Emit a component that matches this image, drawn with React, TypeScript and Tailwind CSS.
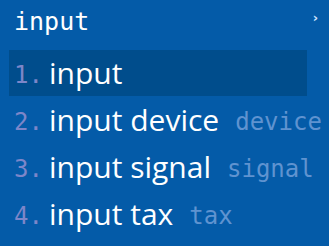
const candidates = [
  { text: "input", note: "" },
  { text: "input device", note: "device" },
  { text: "input signal", note: "signal" },
  { text: "input tax", note: "tax" },
];

export default function App() {
  return (
    <main className="w-[329px] h-[246px] bg-[#045ba8] overflow-hidden">
      <div className="flex items-start justify-between h-[50px] pl-[14px] pr-[11px] pt-[5px]">
        <span className="font-['DejaVu_Sans_Mono',monospace] text-[25px] leading-[33px] text-white">
          input
        </span>
        <span className="font-['DejaVu_Sans',sans-serif] font-bold text-[13px] leading-[26px] text-[#cfe3ff]">
          ›
        </span>
      </div>
      <ul className="flex flex-col">
        {candidates.map((c, i) => (
          <li
            key={c.text}
            className={
              i === 0
                ? "flex items-center h-[46px] w-[298px] ml-[9px] pl-[5px] bg-[#004d8c]"
                : "flex items-center h-[47px] ml-[9px] pl-[5px]"
            }
          >
            <span className="font-['DejaVu_Sans_Mono',monospace] text-[24px] text-[#7d86c9] w-[35px] mt-[4px]">
              {i + 1}.
            </span>
            <span className="font-['Open_Sans',sans-serif] text-[30px] leading-none text-white">
              {c.text}
            </span>
            {c.note && (
              <span className="ml-[16px] font-['DejaVu_Sans_Mono',monospace] text-[24px] text-[#5f93d0] mt-[4px]">
                {c.note}
              </span>
            )}
          </li>
        ))}
      </ul>
    </main>
  );
}
